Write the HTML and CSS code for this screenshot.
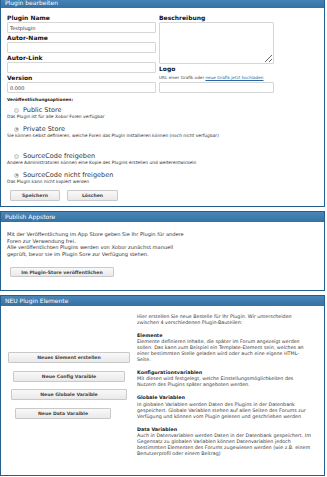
FILE: index.html
```html
<!DOCTYPE html>
<html lang="de">
<head>
    <meta charset="UTF-8" />
    <meta name="viewport" content="width=device-width, initial-scale=1.0">
    <title>Plugin bearbeiten</title>
    <link rel="stylesheet" href="styles.css">
</head>
<body>

<!-- Plugin bearbeiten -->
<div class="panel panel-first">
    <div class="panel-head">Plugin bearbeiten</div>
    <div class="panel-body edit-body">
        <div class="form-cols">
            <div class="col-left">
                <label class="lbl">Plugin Name</label>
                <input class="field" type="text" value="Testplugin">
                <label class="lbl">Autor-Name</label>
                <input class="field" type="text">
                <label class="lbl">Autor-Link</label>
                <input class="field" type="text">
                <label class="lbl">Version</label>
                <input class="field" type="text" value="0.000">
            </div>
            <div class="col-right">
                <label class="lbl">Beschreibung</label>
                <textarea class="field area"></textarea>
                <label class="lbl lbl-logo">Logo</label>
                <div class="hint">URL einer Grafik oder <a href="#">neue Grafik jetzt hochladen</a></div>
                <input class="field" type="text">
            </div>
        </div>

        <div class="opts-title">Veröffentlichungsoptionen:</div>

        <div class="opts">
            <div class="opt">
                <div class="opt-label"><span class="radio"></span>Public Store</div>
                <div class="opt-desc">Das Plugin ist für alle Xobor Foren verfügbar</div>
            </div>
            <div class="opt opt-gap">
                <div class="opt-label"><span class="radio checked"></span>Private Store</div>
                <div class="opt-desc">Sie können selbst definieren, welche Foren das Plugin installieren können (noch nicht verfügbar)</div>
            </div>
            <div class="opt">
                <div class="opt-label"><span class="radio"></span>SourceCode freigeben</div>
                <div class="opt-desc">Andere Administratoren können eine Kopie des Plugins erstellen und weiterentwickeln</div>
            </div>
            <div class="opt">
                <div class="opt-label"><span class="radio checked"></span>SourceCode nicht freigeben</div>
                <div class="opt-desc">Das Plugin kann nicht kopiert werden</div>
            </div>
        </div>

        <div class="actions">
            <button class="btn btn-save">Speichern</button>
            <button class="btn btn-del">Löschen</button>
        </div>
    </div>
</div>

<!-- Publish Appstore -->
<div class="panel">
    <div class="panel-head">Publish Appstore</div>
    <div class="panel-body publish-body">
        <p class="publish-text">Mit der Veröffentlichung im App Store geben Sie Ihr Plugin für andere<br>Foren zur Verwendung frei.<br>Alle veröffentlichten Plugins werden von Xobor zunächst manuell<br>geprüft, bevor sie im Plugin Sore zur Verfügung stehen.</p>
        <button class="btn btn-publish">Im Plugin-Store veröffentlichen</button>
    </div>
</div>

<!-- NEU Plugin Elemente -->
<div class="panel">
    <div class="panel-head">NEU Plugin Elemente</div>
    <div class="panel-body elements-body">
        <div class="el-buttons">
            <button class="btn btn-el">Neues Element erstellen</button>
            <button class="btn btn-el">Neue Config Varaible</button>
            <button class="btn btn-el">Neue Globale Varaible</button>
            <button class="btn btn-el btn-data">Neue Data Varaible</button>
        </div>
        <div class="el-info">
            <p>Hier erstellen Sie neue Bestelle für Ihr Plugin. Wir unterscheiden<br>zwischen 4 verschiedenen Plugin-Bauteilen:</p>
            <p><strong>Elemente</strong><br>Elemente definieren Inhalte, die später im Forum angezeigt werden<br>sollen. Das kann zum Beispiel ein Template-Element sein, welches an<br>einer bestimmten Stelle geladen wird oder auch eine eigene HTML-<br>Seite.</p>
            <p><strong>Konfigurationsvariablen</strong><br>Mit diesen wird festgelegt, welche Einstellungsmöglichkeiten des<br>Nutzern des Plugins später angeboten werden.</p>
            <p><strong>Globale Variablen</strong><br>In globalen Variablen werden Daten des Plugins in der Datenbank<br>gespeichert. Globale Variablen stehen auf allen Seiten des Forums zur<br>Verfügung und können vom Plugin gelesen und geschrieben werden</p>
            <p><strong>Data Variablen</strong><br>Auch in Datenvariablen werden Daten in der Datenbank gespeichert. Im<br>Gegensatz zu globalen Variablen können Datenvariablen jedoch<br>bestimmten Elementen des Forums zugewiesen werden (wie z.B. einem<br>Benutzerprofil oder einem Beitrag)</p>
        </div>
    </div>
</div>

</body>
</html>
```

FILE: styles.css
```css
/* Base */
* {
    margin: 0;
    padding: 0;
    box-sizing: border-box;
}

body {
    font-family: 'DejaVu Sans', Verdana, sans-serif;
    color: #333;
    background: #fff;
}

/* Panels */
.panel {
    border: 1px solid #255f8e;
    margin: 0 2px 4px 0;
    background: #fff;
}

.panel-first {
    margin-top: -3px;
}

.panel-head {
    height: 10px;
    line-height: 10px;
    padding-left: 4px;
    font-size: 6px;
    color: #fff;
    background: linear-gradient(#4a87b8, #3372a3);
}

/* Plugin bearbeiten */
.edit-body {
    padding: 5px 0 5px 6px;
}

.form-cols {
    display: flex;
    gap: 3px;
}

.col-left,
.col-right {
    display: flex;
    flex-direction: column;
}

.col-left {
    width: 149px;
}

.col-right {
    width: 115px;
}

.lbl {
    font-size: 6px;
    font-weight: bold;
    line-height: 9px;
    color: #111;
}

.lbl-logo {
    line-height: 10px;
}

.field {
    height: 11px;
    border: 1px solid #d6d6d6;
    border-radius: 1px;
    padding: 0 2px;
    font-family: inherit;
    font-size: 5px;
    color: #333;
    background: #fff;
}

.area {
    height: 42px;
    resize: vertical;
}

.hint {
    font-size: 4.2px;
    line-height: 8px;
    color: #444;
    white-space: nowrap;
}

.hint a {
    color: #2a66a0;
}

.opts-title {
    margin-top: 3px;
    font-size: 4.3px;
    font-weight: bold;
    line-height: 8px;
    color: #222;
}

.opts {
    margin-top: 2px;
}

.opt {
    margin-bottom: 5px;
}

.opt-gap {
    margin-bottom: 13px;
}

.opt-label {
    display: flex;
    align-items: center;
    font-size: 6.5px;
    line-height: 8px;
    color: #333;
    padding-left: 7px;
}

.radio {
    width: 5px;
    height: 5px;
    border-radius: 50%;
    border: 1px solid #c4c4c4;
    background: #ececec;
    margin-right: 4px;
    position: relative;
}

.radio.checked::after {
    content: '';
    position: absolute;
    left: 0.5px;
    top: 0.5px;
    width: 2px;
    height: 2px;
    border-radius: 50%;
    background: #8a8a8a;
}

.opt-desc {
    font-size: 4.4px;
    line-height: 6px;
    color: #333;
    white-space: nowrap;
}

.actions {
    display: flex;
    gap: 7px;
    margin: 2px 0 0 3px;
}

/* Buttons */
.btn {
    height: 11px;
    font-family: inherit;
    font-weight: bold;
    font-size: 4.6px;
    color: #444;
    border: 1px solid #c9c9c9;
    border-radius: 1px;
    background: linear-gradient(#f9f9f9, #e9e9e9);
    white-space: nowrap;
}

.btn-save {
    width: 50px;
}

.btn-del {
    width: 51px;
}

/* Publish Appstore */
.publish-body {
    padding: 9px 0 12px 6px;
}

.publish-text {
    font-size: 5.1px;
    line-height: 6.5px;
    color: #333;
    white-space: nowrap;
}

.btn-publish {
    width: 104px;
    height: 10px;
    margin: 10px 0 0 3px;
}

/* NEU Plugin Elemente */
.elements-body {
    display: flex;
    padding: 8px 0 18px 0;
}

.el-buttons {
    width: 136px;
    display: flex;
    flex-direction: column;
    justify-content: center;
    align-items: center;
    gap: 7.5px;
}

.btn-el {
    padding: 0 28px;
}

.btn-data {
    padding: 0 22px;
    margin-right: 12px;
}

.el-info {
    font-size: 4.8px;
    line-height: 6.1px;
    color: #3a3a3a;
    white-space: nowrap;
}

.el-info p + p {
    margin-top: 7px;
}

.el-info strong {
    color: #222;
}
```
